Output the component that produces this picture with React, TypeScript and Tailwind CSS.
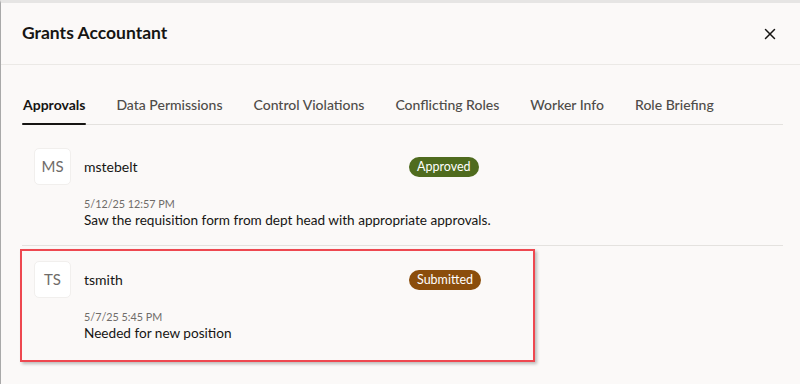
import { X } from "lucide-react";

const tabs = ["Approvals", "Data Permissions", "Control Violations", "Conflicting Roles", "Worker Info", "Role Briefing"];

const approvals = [
  {
    initials: "MS",
    user: "mstebelt",
    status: "Approved",
    badge: "bg-[#4f6b1e]",
    time: "5/12/25 12:57 PM",
    comment: "Saw the requisition form from dept head with appropriate approvals.",
  },
  {
    initials: "TS",
    user: "tsmith",
    status: "Submitted",
    badge: "bg-[#8b4e0c]",
    time: "5/7/25 5:45 PM",
    comment: "Needed for new position",
  },
];

type Approval = (typeof approvals)[number];

function ApprovalRow({ item }: { item: Approval }) {
  return (
    <div className="pl-[12px]">
      <div className="flex items-center">
        <div className="w-[37px] h-[37px] rounded-[5px] bg-white border border-[#f1efed] flex items-center justify-center text-[15px] text-[#6f6c69]">
          {item.initials}
        </div>
        <div className="ml-[13px] w-[325px] text-[14px] text-[#161513]">{item.user}</div>
        <span className={`${item.badge} text-white text-[12.5px] leading-[20px] px-[8px] rounded-full`}>{item.status}</span>
      </div>
      <div className="pl-[50px] mt-[12px]">
        <div className="text-[10.8px] leading-[14px] text-[#6f6c69]">{item.time}</div>
        <div className="text-[13.6px] leading-[18px] text-[#161513]">{item.comment}</div>
      </div>
    </div>
  );
}

export default function App() {
  return (
    <div
      className="w-[800px] h-[384px] overflow-hidden bg-[#fbf9f8] border-t-[3px] border-t-[#e6e5e4] border-l border-l-[#a9a9a9]"
      style={{ fontFamily: 'Lato, "Noto Sans", sans-serif' }}
    >
      {/* Header */}
      <div className="h-[62px] flex items-center justify-between pl-[21px] pr-[21px] border-b border-[#ebe9e6]">
        <h1 className="text-[17.5px] font-bold text-[#161513]">Grants Accountant</h1>
        <X size={18} strokeWidth={2} className="text-[#161513]" />
      </div>

      {/* Tabs */}
      <div className="ml-[21px] mr-[17px] flex gap-[29px] border-b border-[#e4e2df]">
        {tabs.map((tab, i) => (
          <div key={tab} className="flex flex-col pt-[30px]">
            <span
              className={`text-[14px] leading-[20px] px-px ${
                i === 0 ? "font-bold text-[#161513]" : "font-medium text-[#4f4c49]"
              }`}
            >
              {tab}
            </span>
            <div className={`mt-[8px] h-[2px] -mb-px rounded-full ${i === 0 ? "bg-[#161513]" : "bg-transparent"}`} />
          </div>
        ))}
      </div>

      {/* Approval list */}
      <div className="ml-[21px] mr-[17px]">
        <div className="pt-[23px] pb-[16px] border-b border-[#e4e2df]">
          <ApprovalRow item={approvals[0]} />
        </div>
        <div className="mt-[3px] w-[515px] -ml-[2px] border-2 border-[#ee4850] shadow-[2px_2px_3px_rgba(0,0,0,0.25)] pt-[10px] pb-[18px]">
          <ApprovalRow item={approvals[1]} />
        </div>
      </div>
    </div>
  );
}
